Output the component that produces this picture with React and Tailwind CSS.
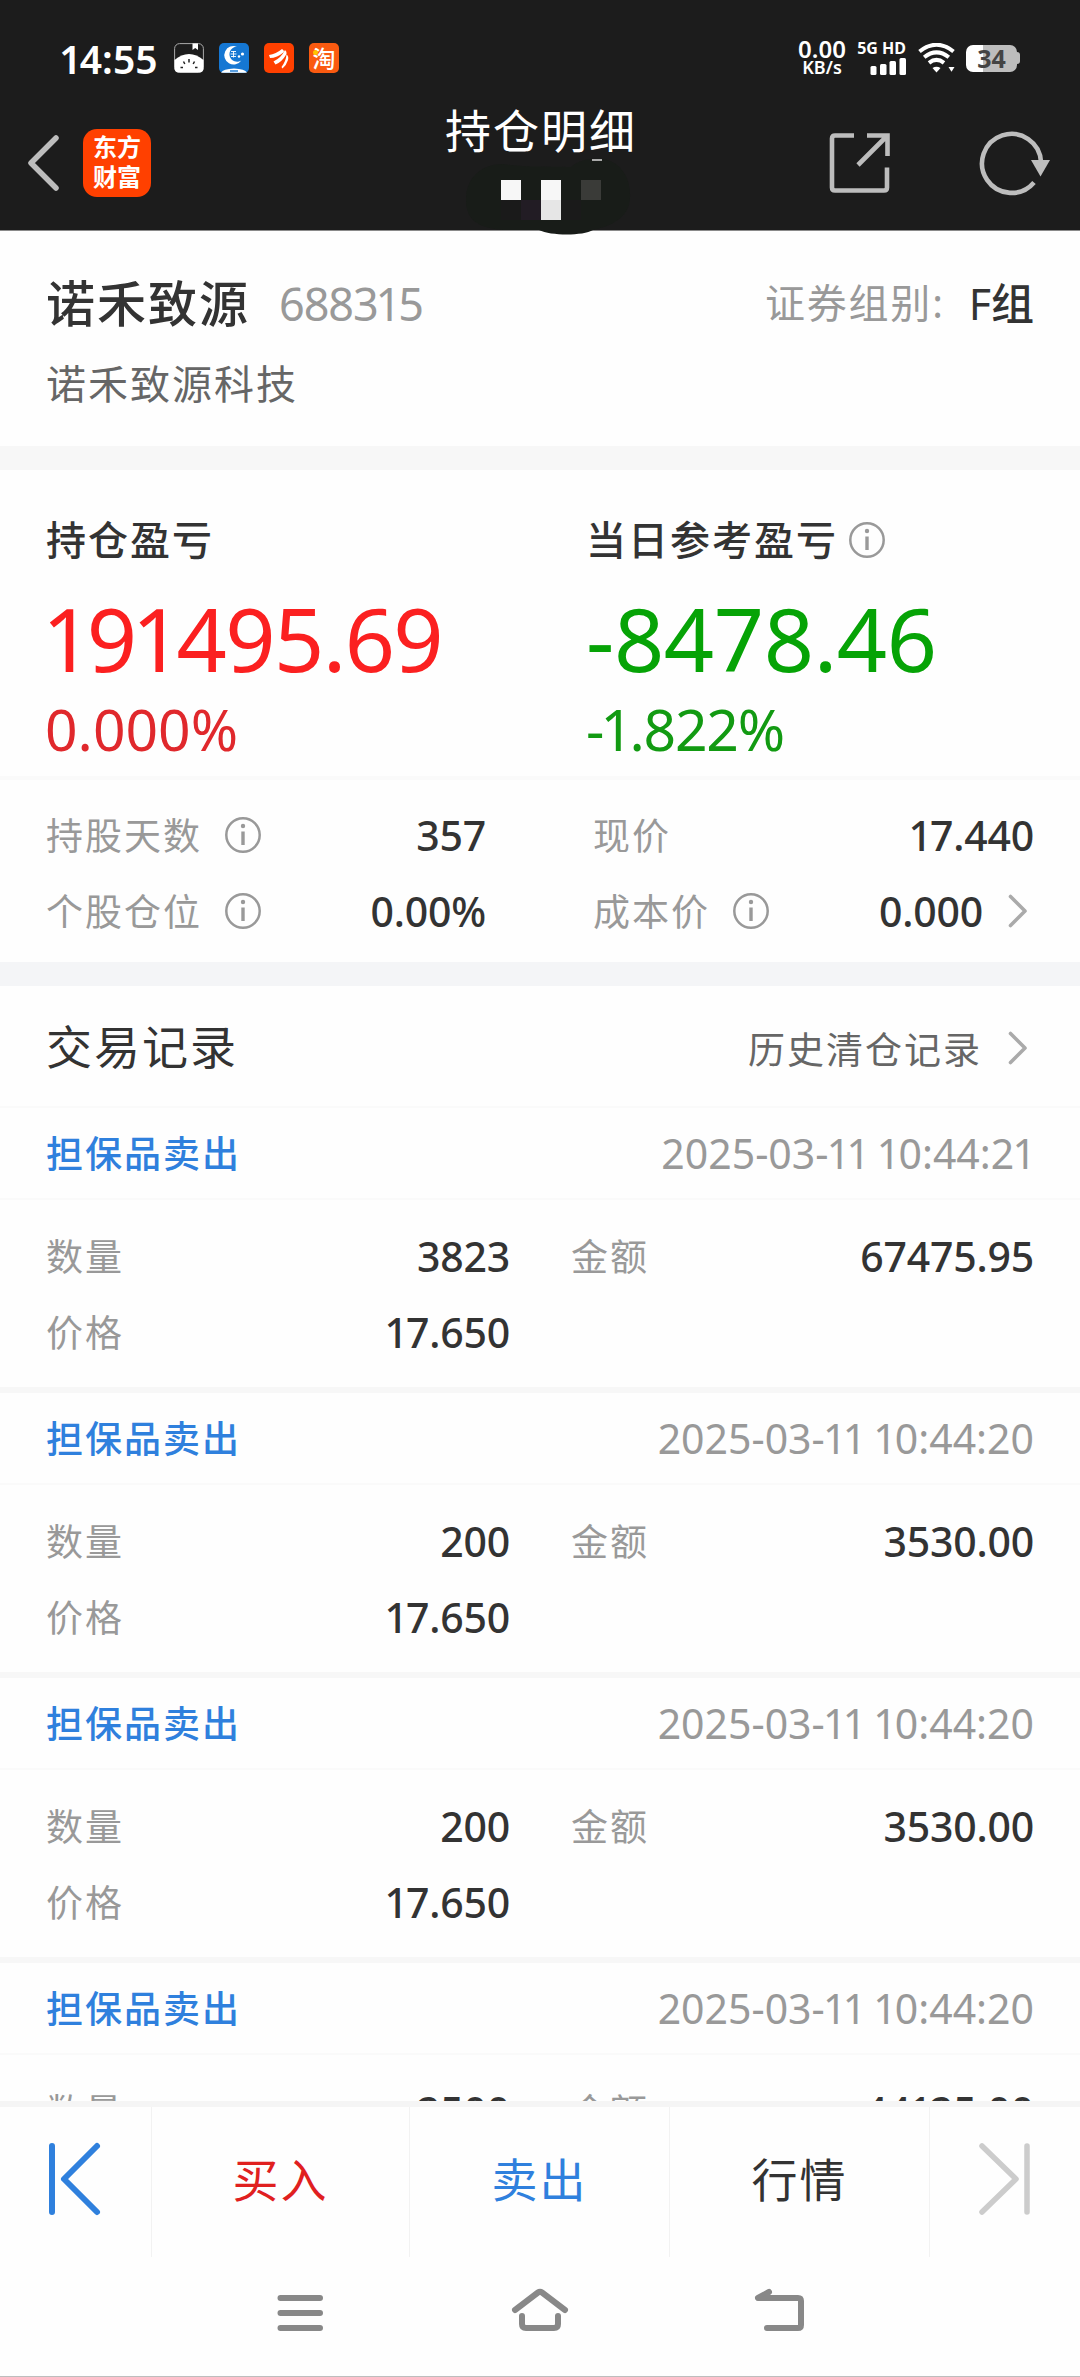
import React from "react";

const records = [
  { id: 1, time: "2025-03-11 10:44:21", amount: "3823", total: "67475.95", price: "17.650" },
  { id: 2, time: "2025-03-11 10:44:20", amount: "200", total: "3530.00", price: "17.650" },
  { id: 3, time: "2025-03-11 10:44:20", amount: "200", total: "3530.00", price: "17.650" },
  { id: 4, time: "2025-03-11 10:44:20", amount: "2500", total: "44125.00", price: "17.650" },
];

// the digit 1 is set narrower than the other digits
function Num({ children, className }) {
  return (
    <span className={className}>
      {children.split(/(1)/).map((part, i) =>
        part === "1" ? <span key={i} className="mx-[-0.045em]">1</span> : part
      )}
    </span>
  );
}

function InfoIcon({ className }) {
  return (
    <svg className={className} width="36" height="36" viewBox="0 0 36 36" fill="none">
      <circle cx="18" cy="18" r="16.7" stroke="#999" strokeWidth="2.5" />
      <circle cx="18" cy="9" r="2.2" fill="#999" />
      <path d="M18 14.5V28" stroke="#999" strokeWidth="3.4" />
    </svg>
  );
}

function Chevron({ className }) {
  return (
    <svg className={className} width="20" height="34" viewBox="0 0 20 34" fill="none">
      <path d="M2.5 2.5L17 17L2.5 31.5" stroke="#aaa" strokeWidth="3.6" strokeLinecap="round" strokeLinejoin="round" />
    </svg>
  );
}

function StatusBar() {
  return (
    <div className="flex h-[88px] items-center pt-7 pl-[61px] pr-[60px] text-white">
      <Num className="w-[113px] text-[39px] font-semibold leading-none whitespace-nowrap">14:55</Num>
      <div className="flex gap-[15px]">
        <svg width="30" height="30" viewBox="0 0 30 30">
          <rect x="0.6" y="0.6" width="28.8" height="28.8" rx="5" fill="#1c1c1c" stroke="#aaa" strokeWidth="1" />
          <path d="M18.5 0.5H24V7L21.2 5L18.5 7Z" fill="#fff" />
          <path d="M0.5 17C5 13 10 11 15 11S25 13 29.5 17V25Q29.5 29.5 25 29.5H5Q0.5 29.5 0.5 25Z" fill="#fff" />
          <path d="M15 16V19.5M9.5 18.5L10.8 21M20.5 18.5L19.2 21M6.5 24.5H9M21 24.5H23.5" stroke="#222" strokeWidth="1.5" />
        </svg>
        <svg width="30" height="30" viewBox="0 0 30 30">
          <rect width="30" height="30" rx="5" fill="#1577d3" />
          <path d="M18 3.6A9.3 9.3 0 1 0 22.3 17.5A7.6 7.6 0 1 1 18 3.6Z" fill="#fff" />
          <path d="M12 8.5H17M11.5 11H17.5M12 13.5H17M14.5 8V14.5" stroke="#fff" strokeWidth="0.9" />
          <circle cx="20" cy="13.5" r="1.2" fill="#fff" />
          <circle cx="23.5" cy="11" r="1.6" fill="#fff" />
          <path d="M2 29.8Q4 26 15 25.5Q26 26 28 29.8Z" fill="#fff" />
          <path d="M11 28H19" stroke="#1577d3" strokeWidth="1.4" />
        </svg>
        <svg width="30" height="30" viewBox="0 0 30 30">
          <rect width="30" height="30" rx="5" fill="#ff4000" />
          <path d="M5 12Q12 11 18 6Q20 7 20 9Q13 15 6 15Z" fill="#fff" />
          <path d="M9.5 18.5Q17 15 21 7Q23 8.5 22.5 11Q18 19 11.5 21.5Z" fill="#fff" />
          <path d="M17.5 24Q22 18 22.5 11.5Q25 13 24 17Q22.5 22 18.5 25.5Z" fill="#fff" />
        </svg>
        <div className="relative flex h-[30px] w-[30px] items-center justify-center rounded-[5px] bg-[#fa5a10] text-[23px] font-medium leading-none">
          淘
          <i className="absolute left-1 top-[7px] size-[5px] rounded-full bg-[#ffc400]" />
        </div>
      </div>
      <div className="ml-auto flex items-center">
        <div className="flex w-[50px] flex-col items-center font-semibold">
          <span className="text-[24px] leading-[19px]">0.00</span>
          <span className="text-[18px] leading-[19px]">KB/s</span>
        </div>
        <div className="ml-[9px] flex w-[50px] flex-col items-end gap-[3px]">
          <span className="text-[16px] font-bold leading-[14px] whitespace-nowrap">5G HD</span>
          <svg width="36" height="17" viewBox="0 0 36 17" fill="#fff">
            <rect x="0.5" y="8" width="6" height="9" rx="1.5" />
            <rect x="10" y="6" width="6.5" height="11" rx="1.5" />
            <rect x="19.5" y="3" width="6.5" height="14" rx="1.5" />
            <rect x="29.5" y="0" width="6.5" height="17" rx="1.5" />
          </svg>
        </div>
        <svg className="ml-[12px]" width="38" height="30" viewBox="0 0 38 30" fill="none">
          <path d="M1.5 8.5Q18.5 -5 35.5 8.5M6.2 14.2Q18.5 4.5 30.8 14.2M11 19.8Q18.5 14 26 19.8" stroke="#fff" strokeWidth="4" />
          <path d="M14.5 25Q18.5 22.5 22.5 25L18.5 29.5Z" fill="#fff" />
          <path d="M30.5 24H36.5L33.5 28.8Z" fill="#fff" />
        </svg>
        <div className="ml-[10px] flex items-center">
          <div className="flex h-[27px] w-[51px] items-center justify-center rounded-[7px] bg-linear-to-r from-white from-34% to-[#bdbdbd] to-34% text-[25px] font-bold leading-none text-[#444]">
            34
          </div>
          <div className="h-3 w-[3px] rounded-r-sm bg-[#bdbdbd]" />
        </div>
      </div>
    </div>
  );
}

function Header() {
  return (
    <header className="relative h-[231px] border-b border-[#8a8a8a] bg-[#1c1c1c]">
      <StatusBar />
      <div className="flex h-[142px] items-center justify-between pl-[26px] pr-[29px] pt-2">
        <div className="flex w-[300px] items-center">
          <svg width="36" height="56" viewBox="0 0 36 56" fill="none">
            <path d="M30 3L5 28L30 53" stroke="#bdbdbd" strokeWidth="5.5" strokeLinecap="round" strokeLinejoin="round" />
          </svg>
          <div className="ml-[21px] flex h-[68px] w-[68px] flex-col items-center justify-center rounded-[14px] bg-[#ff4000] pb-0.5 text-[24px] font-bold leading-[30px] text-white">
            <span>东方</span>
            <span>财富</span>
          </div>
        </div>
        <h1 className="-mt-[67px] pl-[5px] text-[46px] leading-none tracking-[2px] text-white">持仓明细</h1>
        <div className="flex w-[300px] items-center justify-end gap-[88px]">
          <svg width="62" height="62" viewBox="0 0 62 62" fill="none" stroke="#bdbdbd" strokeWidth="4.6">
            <path d="M25 3.5H6Q3 3.5 3 6.5V55.5Q3 58.5 6 58.5H55Q58 58.5 58 55.5V35.5" />
            <path d="M38 3.5H58.5V24M57 5L29 33" />
          </svg>
          <svg width="72" height="66" viewBox="0 0 72 66" fill="none">
            <path d="M62 32A29.5 29.5 0 1 0 55 52.5" stroke="#bdbdbd" strokeWidth="4.6" />
            <path d="M52 30H71L61.5 46.5Z" fill="#bdbdbd" />
          </svg>
        </div>
      </div>
      {/* masked account number */}
      <svg className="absolute left-[465px] top-[156px]" width="168" height="80" viewBox="0 0 168 80">
        <path d="M1 44C1 20 18 8 38 8C60 12 90 10 106 11C114 4 124 2 138 3C156 6 166 22 165 42C164 62 146 70 128 74C118 80 86 80 74 74H38C16 72 1 66 1 44Z" fill="#181c18" />
        <rect x="127" y="3" width="10" height="2" fill="#aaa" />
        <rect x="36" y="24" width="20" height="20" fill="#f7f7f7" />
        <rect x="36" y="44" width="20" height="20" fill="#1a1a1a" />
        <rect x="56" y="44" width="20" height="20" fill="#221c24" />
        <rect x="76" y="24" width="20" height="20" fill="#f7f7f7" />
        <rect x="76" y="44" width="20" height="20" fill="#e6e6e6" />
        <rect x="96" y="44" width="20" height="20" fill="#1a1a1a" />
        <rect x="116" y="24" width="20" height="20" fill="#3a3b38" />
      </svg>
    </header>
  );
}

function Summary() {
  return (
    <section className="h-[492px]">
      <div className="flex h-[310px] border-b-4 border-[#fafafa] pl-[46px] leading-none">
        <div className="w-[540px]">
          <div className="flex h-[139px] items-center text-[40px] font-medium tracking-[2px]">持仓盈亏</div>
          <Num className="flex h-[58px] items-center text-[88px] tracking-[-1.6px] text-[#fb2020]">191495.69</Num>
          <Num className="-ml-px flex h-[124px] items-center text-[57px] text-[#e0282c]">0.000%</Num>
        </div>
        <div>
          <div className="flex h-[139px] items-center text-[40px] font-medium tracking-[2px]">
            当日参考盈亏
            <InfoIcon className="ml-[11px]" />
          </div>
          <Num className="flex h-[58px] items-center text-[88px] tracking-[-0.4px] text-[#06a306]">-8478.46</Num>
          <Num className="flex h-[124px] items-center text-[57px] tracking-[-1.2px] text-[#129a12]">-1.822%</Num>
        </div>
      </div>
      <div className="flex justify-between pt-[17px] pl-[46px] pr-[46px] leading-none">
        <div className="w-[440px]">
          <Stat label="持股天数" info value="357" />
          <Stat label="个股仓位" info value="0.00%" />
        </div>
        <div className="w-[441px]">
          <Stat label="现价" value="17.440" />
          <Stat label="成本价" info value="0.000" arrow />
        </div>
      </div>
    </section>
  );
}

function Stat({ label, value, info, arrow }) {
  return (
    <div className="flex h-[76px] items-center">
      <span className="text-[37px] tracking-[2px] text-[#999]">{label}</span>
      {info && <InfoIcon className="ml-[23px]" />}
      <Num className="ml-auto text-[41px] font-medium tracking-[-0.2px]">{value}</Num>
      {arrow && <Chevron className="ml-[25px] mr-[6px]" />}
    </div>
  );
}

function Record({ record }) {
  return (
    <div className="h-[285px] border-b-[6px] border-[#f7f7f7] leading-none">
      <div className="flex h-[92px] items-center justify-between border-b-2 border-[#fafafa] px-[46px]">
        <span className="text-[37px] font-medium tracking-[2px] text-[#2f80dd]">担保品卖出</span>
        <Num className="text-[41px] whitespace-pre text-[#999]">{record.time}</Num>
      </div>
      <div className="flex justify-between px-[46px] pt-[18px]">
        <div className="w-[464px]">
          <Stat label="数量" value={record.amount} />
          <Stat label="价格" value={record.price} />
        </div>
        <div className="w-[463px]">
          <Stat label="金额" value={record.total} />
        </div>
      </div>
    </div>
  );
}

function TabBar() {
  return (
    <div className="flex h-[156px] border-t-[6px] border-[#f5f5f5] text-[46px] leading-none tracking-[2px]">
      <div className="flex w-[151px] items-center justify-center pb-[6px] pr-[3px]">
        <svg width="56" height="78" viewBox="0 0 56 78" fill="none" stroke="#2f80dd" strokeWidth="6" strokeLinecap="round" strokeLinejoin="round">
          <path d="M6 6V72M51 6L18 39L51 72" />
        </svg>
      </div>
      <div className="flex w-[258px] items-center justify-center border-l border-[#f2f2f2] pb-[6px] text-[#e0201f]">买入</div>
      <div className="flex w-[260px] items-center justify-center border-l border-[#f2f2f2] pb-[6px] text-[#2f80dd]">卖出</div>
      <div className="flex w-[261px] items-center justify-center border-x border-[#f2f2f2] pb-[6px]">行情</div>
      <div className="flex flex-1 items-center justify-center pb-[6px]">
        <svg width="56" height="78" viewBox="0 0 56 78" fill="none" stroke="#ccc" strokeWidth="5.5" strokeLinecap="round" strokeLinejoin="round">
          <path d="M5 6L39 39L5 72M50 6V72" />
        </svg>
      </div>
    </div>
  );
}

function SystemNav() {
  return (
    <div className="flex h-[120px] items-center justify-between border-b border-[#bdbdbd] px-[274px] pb-[9px]">
      <svg width="52" height="48" viewBox="0 0 52 48" stroke="#888" strokeWidth="6" strokeLinecap="round">
        <path d="M6.500 10H46M6.500 25H46M6.500 40H46" />
      </svg>
      <svg width="60" height="48" viewBox="0 0 60 48" fill="none" stroke="#888" strokeWidth="6" strokeLinecap="round" strokeLinejoin="round">
        <path d="M5 22L28 4.500Q30 3 32 4.500L55 22M12 28V36Q12 40 16 40H44Q48 40 48 36V28" />
      </svg>
      <svg width="52" height="48" viewBox="0 0 52 48" fill="none" stroke="#888" strokeWidth="6" strokeLinecap="round" strokeLinejoin="round">
        <path d="M15 4L4 10H44Q47 10 47 13V37Q47 40 44 40H13" />
      </svg>
    </div>
  );
}

export default function App() {
  return (
    <div className="flex h-[2377px] w-[1080px] flex-col overflow-hidden bg-[#fefefe] font-['Noto_Sans','Noto_Sans_CJK_SC',sans-serif] text-[#333]">
      <Header />
      <section className="h-[215px] px-[46px] pt-[32px] leading-none">
        <div className="flex h-[80px] items-center">
          <span className="text-[49px] font-medium tracking-[2px]">诺禾致源</span>
          <Num className="ml-[29px] text-[45px] tracking-[-1.1px] text-[#999]">688315</Num>
          <span className="ml-auto text-[40px] tracking-[1.8px] text-[#999]">证券组别:</span>
          <span className="ml-[24px] text-[43px] [font-weight:450]">F组</span>
        </div>
        <div className="flex h-[82px] items-center text-[40px] tracking-[2px] text-[#666]">诺禾致源科技</div>
      </section>
      <div className="h-6 bg-[#f7f7f7]" />
      <Summary />
      <div className="h-6 bg-[#f4f5f7]" />
      <div className="flex h-[122px] items-center border-b-2 border-[#fafafa] px-[46px] leading-none">
        <h2 className="text-[46px] tracking-[2px]">交易记录</h2>
        <span className="ml-auto pt-[6px] text-[37px] tracking-[2px] text-[#666]">历史清仓记录</span>
        <Chevron className="ml-[26px] mr-[6px] mt-1" />
      </div>
      <div className="h-[993px] overflow-hidden">
        {records.map(r => (
          <Record key={r.id} record={r} />
        ))}
      </div>
      <TabBar />
      <SystemNav />
    </div>
  );
}
